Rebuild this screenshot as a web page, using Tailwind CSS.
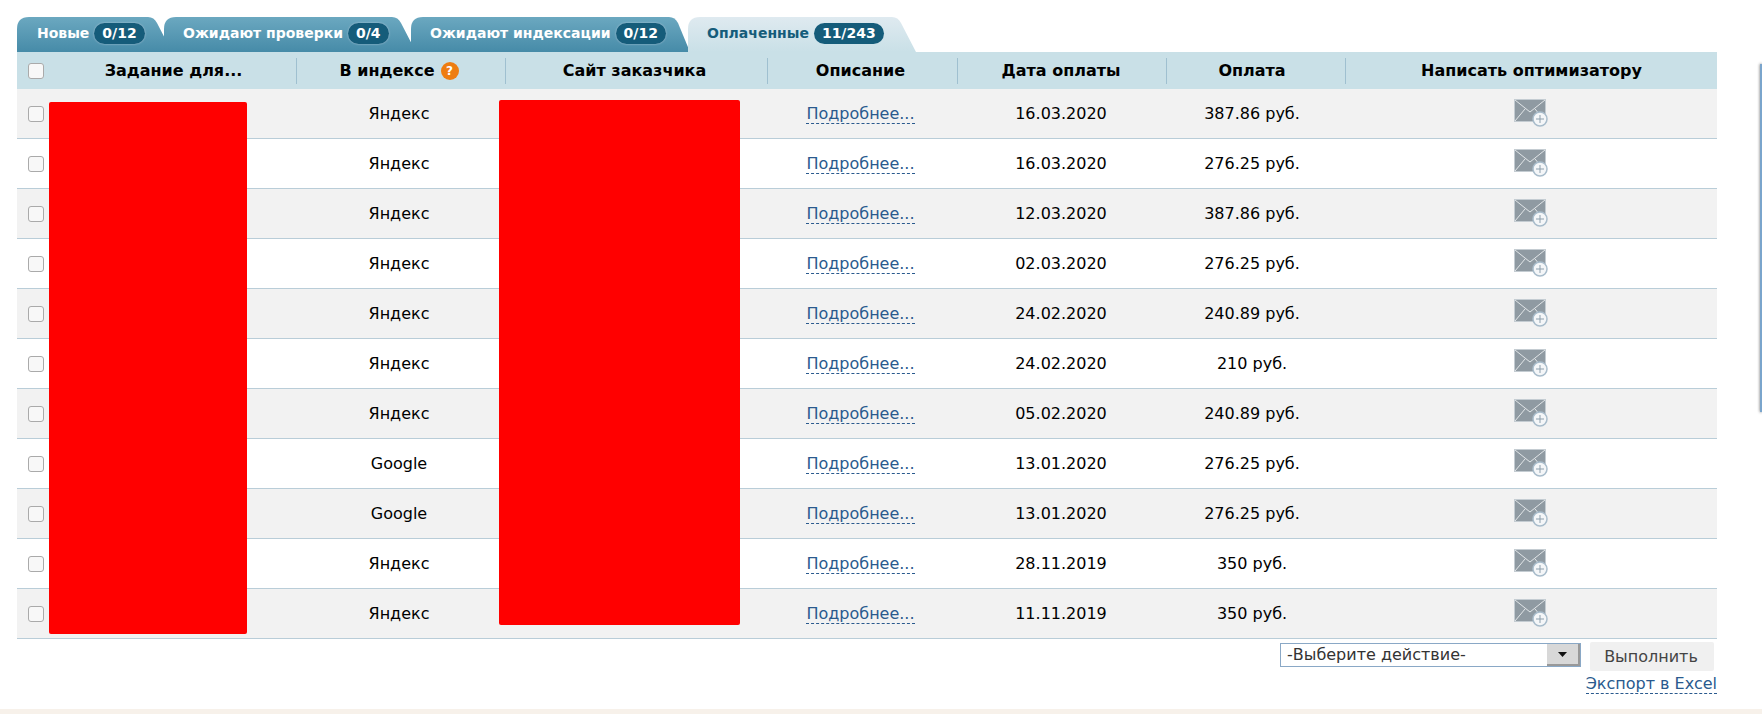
<!DOCTYPE html>
<html lang="ru">
<head>
    <meta charset="UTF-8">
    <title>Оплаченные</title>
    <script src="https://cdn.jsdelivr.net/npm/@tailwindcss/browser@4"></script>
</head>
<body class="bg-white h-[714px] overflow-hidden relative font-['DejaVu_Sans',sans-serif] text-[16px] text-black">

    <div class="pt-[17px] pl-[17px] w-[1717px]">
        <!-- tabs -->
        <div class="flex h-[35px] items-start text-[14px] font-bold">
            <div class="h-[35px] w-[155px] shrink-0 [clip-path:path('M0_35V12Q0_0_12_0H131Q137_0_140_6L155_35Z')] bg-gradient-to-b from-[#6ba8c0] to-[#468ba8] pl-[20px] pt-[6px] text-white flex gap-[5px] items-start">Новые <span class="rounded-full bg-[#155c7a] px-[8px] h-[21px] leading-[20px] shadow-[0_0_2px_#bcd]">0/12</span></div>
            <div class="h-[35px] w-[252px] shrink-0 -ml-[8px] [clip-path:path('M0_35V12Q0_0_12_0H228Q234_0_237_6L252_35Z')] bg-gradient-to-b from-[#6ba8c0] to-[#468ba8] pl-[19px] pt-[6px] text-white flex gap-[5px] items-start">Ожидают проверки <span class="rounded-full bg-[#155c7a] px-[8px] h-[21px] leading-[20px] shadow-[0_0_2px_#bcd]">0/4</span></div>
            <div class="h-[35px] w-[279px] shrink-0 -ml-[5px] [clip-path:path('M0_35V12Q0_0_12_0H258Q264_0_267_6L279_35Z')] bg-gradient-to-b from-[#6ba8c0] to-[#468ba8] pl-[19px] pt-[6px] text-white flex gap-[5px] items-start">Ожидают индексации <span class="rounded-full bg-[#155c7a] px-[8px] h-[21px] leading-[20px] shadow-[0_0_2px_#bcd]">0/12</span></div>
            <div class="h-[35px] w-[228px] shrink-0 -ml-[2px] [clip-path:path('M0_35V12Q0_0_12_0H204Q210_0_213_6L228_35Z')] bg-gradient-to-b from-[#dfeaf0] to-[#c9e0e7] pl-[19px] pt-[6px] text-[#155c7a] flex gap-[5px] items-start">Оплаченные <span class="rounded-full bg-[#155c7a] text-white px-[8px] h-[21px] leading-[20px]">11/243</span></div>
        </div>

        <!-- table -->
        <table class="w-[1700px] table-fixed border-separate border-spacing-0">
            <colgroup>
                <col class="w-[280px]"><col class="w-[209px]"><col class="w-[262px]"><col class="w-[190px]"><col class="w-[209px]"><col class="w-[179px]"><col class="w-[371px]">
            </colgroup>
            <thead>
                <tr class="h-[37px] bg-[#c9e0e7] font-bold">
                    <th class="relative pl-[33px]"><input type="checkbox" class="absolute left-[11px] top-[11px] appearance-none w-[16px] h-[16px] rounded-[3px] border border-[#aaa] bg-[#f8f8f8]">Задание для...<span class="absolute right-0 top-[6px] h-[26px] w-px bg-[#9fc0d0]"></span></th>
                    <th class="relative pr-[5px]"><span class="inline-flex items-center gap-[6px]">В индексе <span class="w-[18px] h-[18px] rounded-full bg-[#ee7d11] text-white text-[12px] leading-[18px]">?</span></span><span class="absolute right-0 top-[6px] h-[26px] w-px bg-[#9fc0d0]"></span></th>
                    <th class="relative pr-[5px]">Сайт заказчика<span class="absolute right-0 top-[6px] h-[26px] w-px bg-[#9fc0d0]"></span></th>
                    <th class="relative pr-[5px]">Описание<span class="absolute right-0 top-[6px] h-[26px] w-px bg-[#9fc0d0]"></span></th>
                    <th class="relative pr-[3px]">Дата оплаты<span class="absolute right-0 top-[6px] h-[26px] w-px bg-[#9fc0d0]"></span></th>
                    <th class="relative pr-[9px]">Оплата<span class="absolute right-0 top-[6px] h-[26px] w-px bg-[#9fc0d0]"></span></th>
                    <th>Написать оптимизатору</th>
                </tr>
            </thead>
            <tbody id="rows"></tbody>
        </table>

        <!-- actions -->
        <div class="flex justify-end items-start gap-[9px] pr-[3px] pt-[3px]">
            <div class="mt-[1px] w-[301px] h-[24px] border border-[#8aa8c6] flex items-center justify-between bg-white text-[#333]">
                <span class="pl-[6px]">-Выберите действие-</span>
                <span class="w-[33px] h-[22px] bg-[#d8d8d8] border-r-2 border-b-2 border-[#999] flex items-center justify-center"><svg width="9" height="5"><path d="M0 0h9L4.500 5z" fill="#111"/></svg></span>
            </div>
            <button class="w-[124px] h-[29px] rounded-[2px] bg-[#f0f0f0] text-[#444] pr-[2px]">Выполнить</button>
        </div>
        <div class="text-right mt-[1px] h-[24px]"><a class="text-[#2a5a8e] border-b border-dashed border-[#2a5a8e]">Экспорт в Excel</a></div>
    </div>

    <!-- redacted blocks over the table -->
    <div class="absolute left-[49px] top-[102px] w-[198px] h-[532px] bg-[#ff0000] rounded-[2px]"></div>
    <div class="absolute left-[499px] top-[100px] w-[241px] h-[525px] bg-[#ff0000] rounded-[2px]"></div>

    <!-- edge of a window behind the page -->
    <div class="absolute right-0 top-[64px] w-[2px] h-[348px] bg-[#7aa5cc] shadow-[0_0_3px_#555]"></div>

    <div class="absolute left-0 right-0 top-[709px] h-[5px] bg-[#f7f1ea]"></div>

    <script>
        const rows = [
            ["Яндекс", "16.03.2020", "387.86 руб."],
            ["Яндекс", "16.03.2020", "276.25 руб."],
            ["Яндекс", "12.03.2020", "387.86 руб."],
            ["Яндекс", "02.03.2020", "276.25 руб."],
            ["Яндекс", "24.02.2020", "240.89 руб."],
            ["Яндекс", "24.02.2020", "210 руб."],
            ["Яндекс", "05.02.2020", "240.89 руб."],
            ["Google", "13.01.2020", "276.25 руб."],
            ["Google", "13.01.2020", "276.25 руб."],
            ["Яндекс", "28.11.2019", "350 руб."],
            ["Яндекс", "11.11.2019", "350 руб."]
        ];
        const envelope = `<svg class="inline-block -ml-[1px] -mt-[2px]" width="34" height="28" viewBox="0 0 34 28">
            <rect x="0.500" y="0.500" width="31" height="22" fill="#8f9aa2" stroke="#c4ccd2"/>
            <path d="M1 1l15 12L31 1M1 22l10-12M31 22L21 10" fill="none" stroke="#e2e6e8" stroke-width="1"/>
            <circle cx="26" cy="20" r="7" fill="#f4f6f8" stroke="#a8bccb" stroke-width="1.500"/>
            <path d="M22 20h8M26 16v8" stroke="#8da0ae" stroke-width="1"/>
        </svg>`;
        document.getElementById("rows").innerHTML = rows.map((r, i) => `
            <tr class="h-[50px] [&>td]:border-b [&>td]:border-[#b9cdd8] ${i % 2 == 0 ? "bg-[#f2f2f2]" : "bg-white"} text-center">
                <td class="text-left pl-[11px]"><input type="checkbox" class="appearance-none block w-[16px] h-[16px] rounded-[3px] border border-[#aaa] bg-[#f8f8f8]"></td>
                <td class="pr-[5px]">${r[0]}</td>
                <td></td>
                <td class="pr-[5px]"><a class="text-[#2a5a8e] border-b border-dashed border-[#2a5a8e]">Подробнее...</a></td>
                <td class="pr-[3px]">${r[1]}</td>
                <td class="pr-[9px]">${r[2]}</td>
                <td>${envelope}</td>
            </tr>`).join("");
    </script>
</body>
</html>
